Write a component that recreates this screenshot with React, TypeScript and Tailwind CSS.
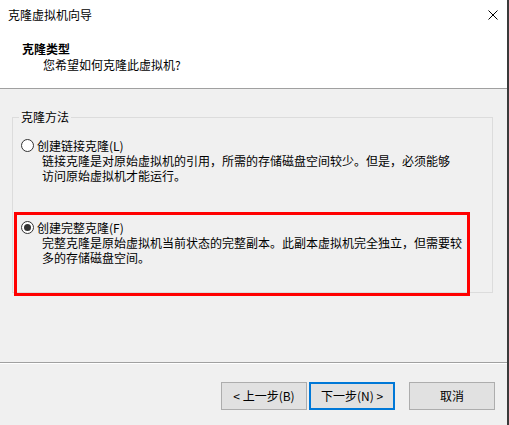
import React from 'react';

const font = { fontFamily: '"Noto Sans CJK SC", "Liberation Sans", sans-serif' };

const Radio: React.FC<{ checked?: boolean }> = ({ checked }) => (
  <span className="w-[13px] h-[13px] rounded-full border border-[#333333] bg-white flex items-center justify-center shrink-0">
    {checked && <span className="w-[7px] h-[7px] rounded-full bg-[#333333]" />}
  </span>
);

const Option: React.FC<{ label: string; lines: string[]; checked?: boolean; className?: string }> = ({
  label,
  lines,
  checked,
  className = '',
}) => (
  <div className={`flex flex-col ${className}`}>
    <div className="flex items-center gap-[3px] h-[15px]">
      <Radio checked={checked} />
      <span className="leading-[15px]">{label}</span>
    </div>
    <div className="pl-[21px] leading-[15px]">
      {lines.map((l, i) => (
        <div key={i} className="whitespace-nowrap">{l}</div>
      ))}
    </div>
  </div>
);

export default function App() {
  return (
    <div
      className="relative w-[509px] h-[425px] bg-[#f0f0f0] border-r-2 border-[#3a3a3a] text-[12px] text-black flex flex-col overflow-hidden"
      style={font}
    >
      {/* header */}
      <div className="h-[89px] bg-white border-b border-[#a0a0a0] flex flex-col shrink-0">
        <div className="h-[29px] flex items-center justify-between pl-[8px] pr-[9px]">
          <span className="leading-[16px]">克隆虚拟机向导</span>
          <svg width="10" height="10" viewBox="0 0 10 10" className="mt-[1px]">
            <path d="M0.5 0.5 L9.5 9.5 M9.5 0.5 L0.5 9.5" stroke="#000" strokeWidth="1" />
          </svg>
        </div>
        <div className="mt-[12px] pl-[22px] font-bold leading-[16px]">克隆类型</div>
        <div className="pl-[43px] leading-[16px]">您希望如何克隆此虚拟机?</div>
      </div>

      {/* body */}
      <div className="h-[274px] shrink-0 border-b border-[#a0a0a0] pt-[20px]">
        <fieldset className="ml-[12px] w-[481px] h-[184px] border border-[#dcdcdc] px-[6px]">
          <legend className="px-[2px] leading-[16px]">克隆方法</legend>
          <div className="pl-[2px] pt-[13px]">
            <Option
              label="创建链接克隆(L)"
              lines={[
                '链接克隆是对原始虚拟机的引用，所需的存储磁盘空间较少。但是，必须能够',
                '访问原始虚拟机才能运行。',
              ]}
            />
            <Option
              className="mt-[37px]"
              checked
              label="创建完整克隆(F)"
              lines={[
                '完整克隆是原始虚拟机当前状态的完整副本。此副本虚拟机完全独立，但需要较',
                '多的存储磁盘空间。',
              ]}
            />
          </div>
        </fieldset>
      </div>

      {/* buttons */}
      <div className="flex-1 border-t border-white flex items-start justify-end pt-[18px] pr-[12px]">
        <div className="flex gap-[2px]">
          <button className="w-[86px] h-[28px] bg-[#e1e1e1] border border-[#adadad] leading-[16px]">
            &lt; 上一步(B)
          </button>
          <button className="w-[86px] h-[28px] bg-[#e1e1e1] border-2 border-[#0078d7] leading-[16px]">
            下一步(N) &gt;
          </button>
        </div>
        <button className="ml-[14px] w-[86px] h-[28px] bg-[#e1e1e1] border border-[#adadad] leading-[16px]">
          取消
        </button>
      </div>

      {/* red highlight annotation */}
      <div className="absolute left-[14px] top-[212px] w-[456px] h-[84px] border-[3px] border-[#ff0000] pointer-events-none" />
    </div>
  );
}
